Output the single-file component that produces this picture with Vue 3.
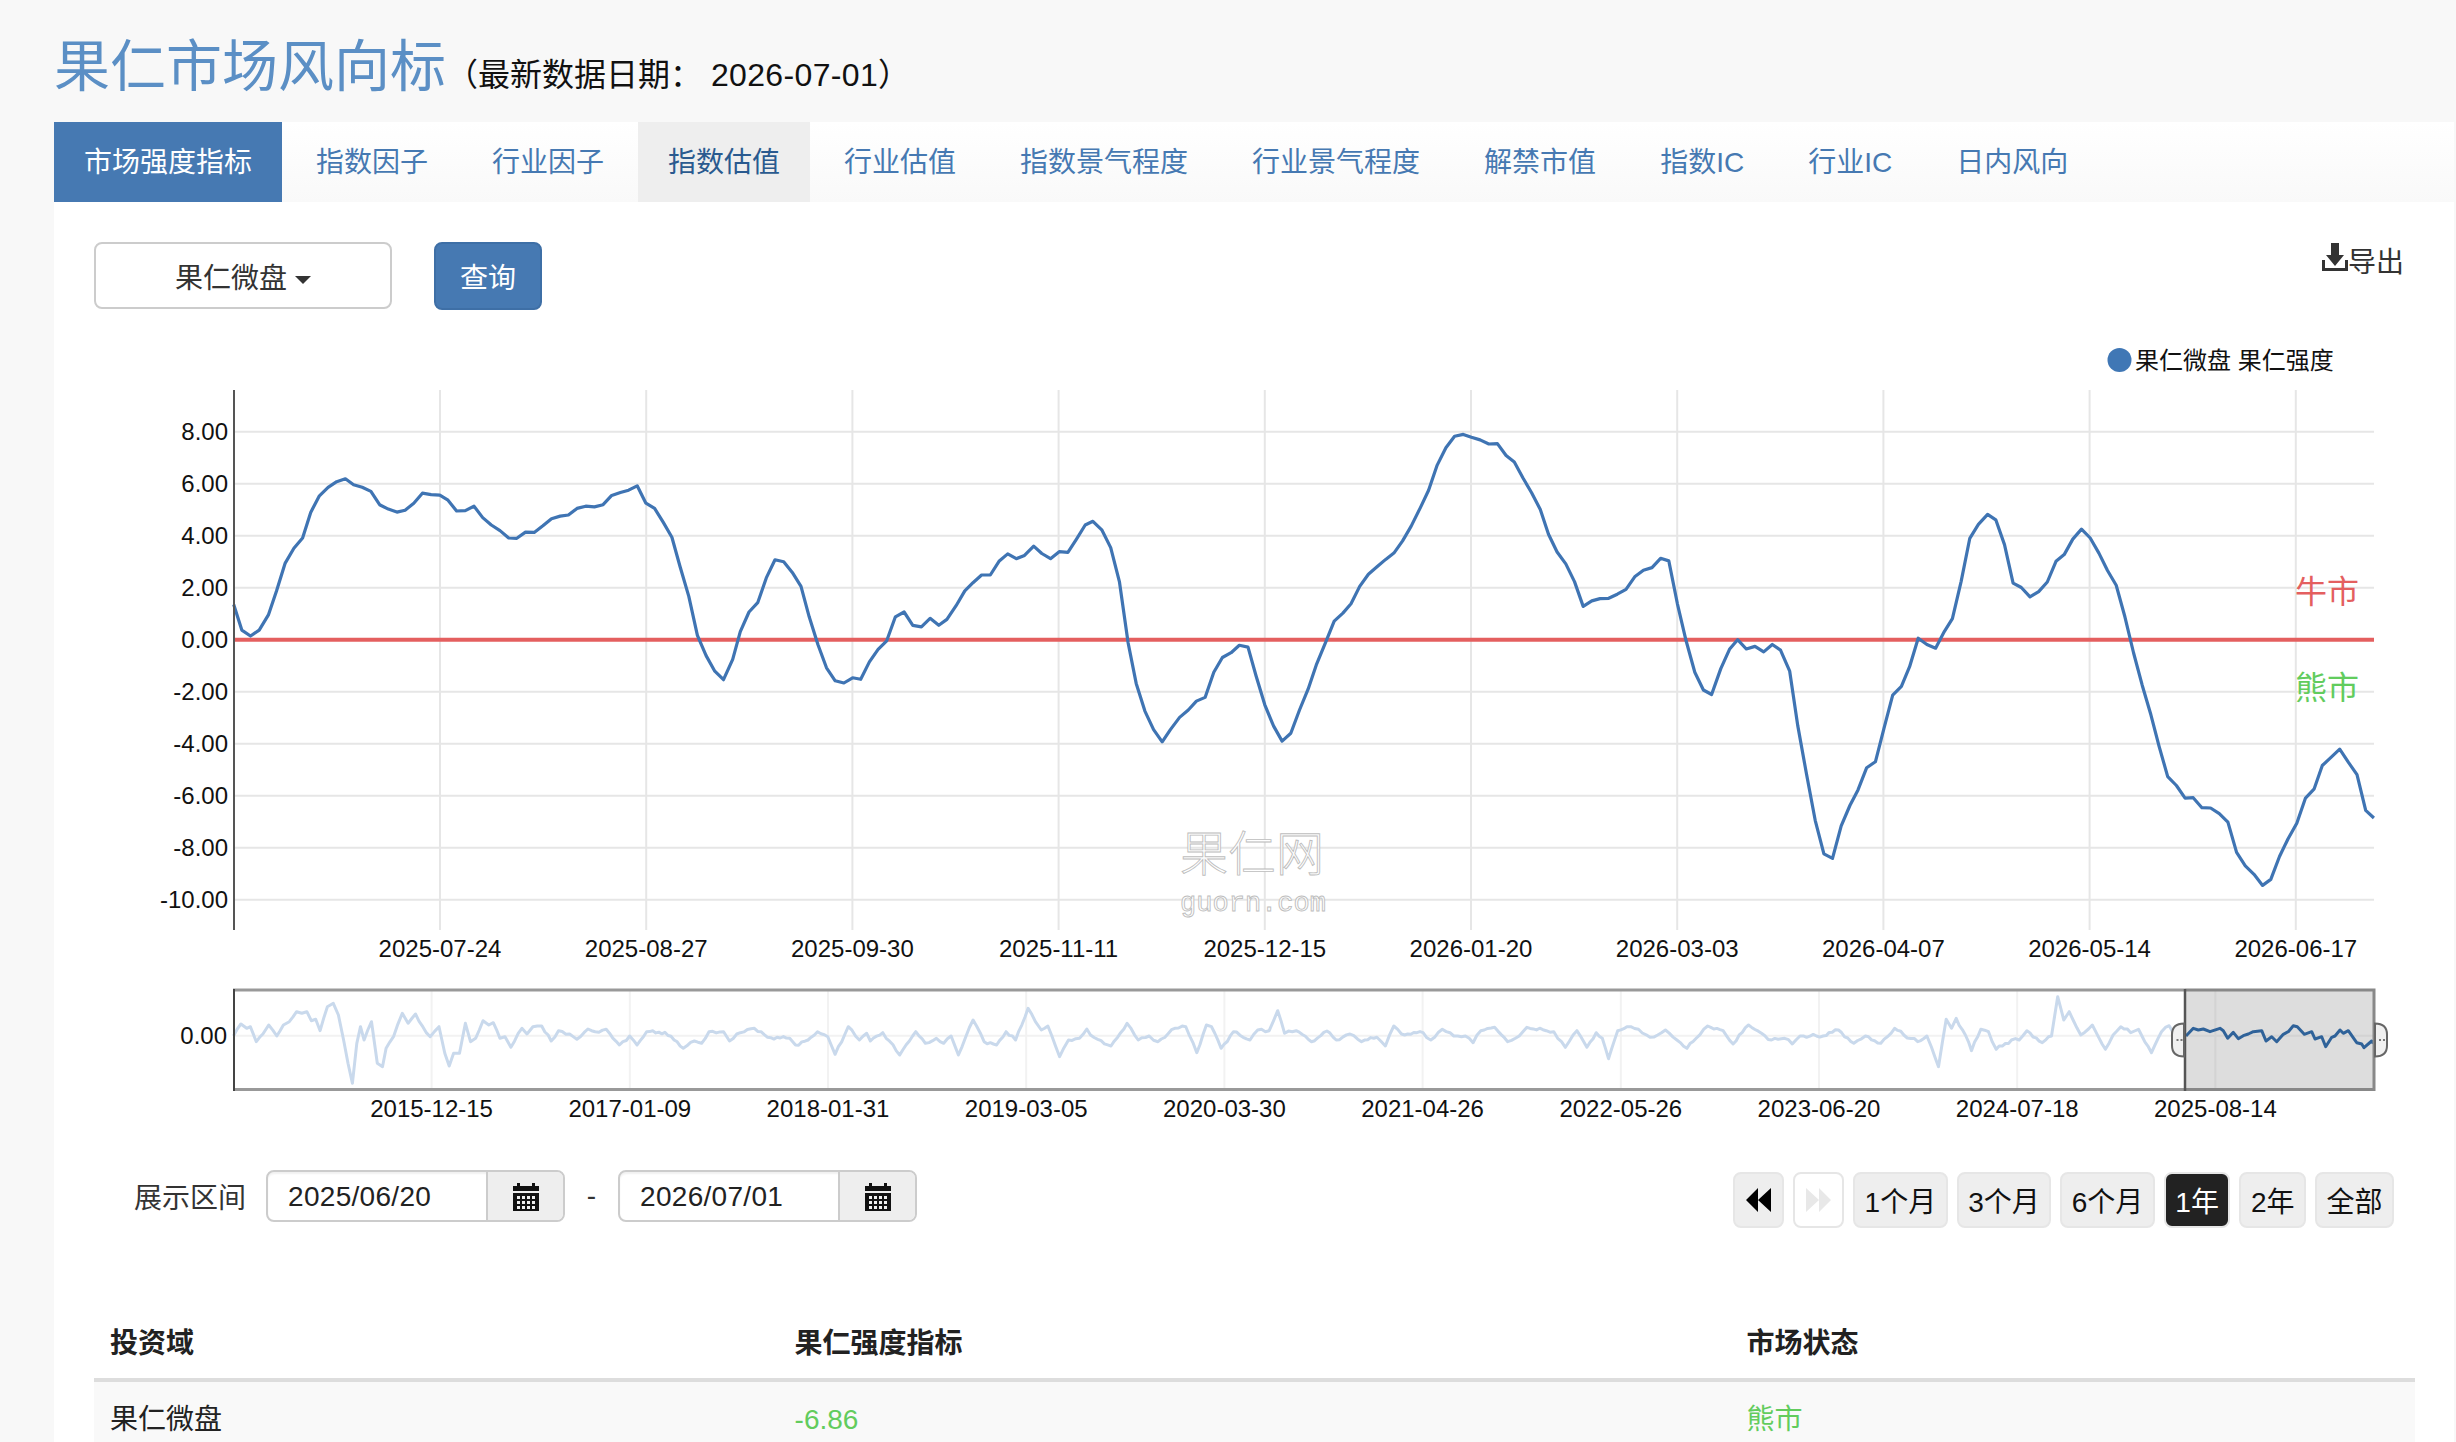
<script setup>
const tabs = [
  "市场强度指标", "指数因子", "行业因子", "指数估值", "行业估值", "指数景气程度",
  "行业景气程度", "解禁市值", "指数IC", "行业IC", "日内风向",
];

// series traced off the chart, as [x, y] pairs in crop coordinates
const crop = (flat, x0, y0, sx, sy) => {
  const out = [];
  for (let i = 0; i < flat.length; i += 2) {
    out.push([x0 + flat[i] / sx, y0 + flat[i + 1] / sy]);
  }
  return out;
};

const toPoints = (pts) => pts.map(([x, y]) => `${x.toFixed(1)},${y.toFixed(1)}`).join(" ");

// the navigator has daily data, so fill the traced points in with a small wiggle
const wiggle = (pts) => {
  const out = [];
  pts.forEach((p, i) => {
    const next = pts[i + 1];
    out.push(p);
    if (!next) return;
    const steps = Math.floor((next[0] - p[0]) / 3);
    for (let s = 1; s < steps; s++) {
      const t = s / steps;
      const x = p[0] + (next[0] - p[0]) * t;
      const noise = Math.sin(x * 2.3) * 0.9 + Math.sin(x * 5.1) * 0.7;
      out.push([x, p[1] + (next[1] - p[1]) * t + noise]);
    }
  });
  return out;
};

const mainA = [262,607,278,676,295,692,312,676,330,635,346,570,363,495,380,455,397,427,413,358,430,313,447,290,464,275,481,267,497,283,514,290,531,301,548,337,565,349,582,357,598,352,615,333,632,306,649,310,666,311,682,325,699,354,716,353,733,341,750,372,767,392,784,407,801,427,817,428,834,411,851,412,868,394,885,375,902,368,918,365,935,347,952,341,969,343,986,337,1003,312,1020,304,1036,298,1053,286,1070,333,1087,347,1104,385,1121,425,1137,505,1154,585,1171,690,1188,745,1205,787,1222,810,1240,755,1255,680,1272,627,1289,602,1306,535,1323,486,1340,491,1357,520,1374,558,1390,640,1407,715,1424,778,1441,813,1458,819,1475,805,1491,809,1508,762,1525,728,1542,705,1559,640];
const mainB = [8,627,25,663,42,667,59,644,76,663,92,647,110,610,127,570,143,548,160,527,177,527,194,490,211,470,228,483,244,474,262,449,278,469,295,483,312,464,329,466,346,430,363,392,378,382,396,406,413,453,430,545,447,710,463,820,480,895,497,945,514,978,530,945,548,912,565,892,581,868,598,858,615,790,632,750,649,737,665,717,682,722,698,800,715,878,732,935,749,976,766,955,783,892,800,835,816,770,834,710,851,652,868,630,884,605,901,558,918,525,935,505,952,485,968,468,985,435,1002,395,1020,345,1036,298,1053,230,1070,183,1087,152,1104,147,1120,155,1137,162,1154,173,1171,172,1188,204,1204,222,1221,265,1238,305,1255,350,1271,417,1288,465,1305,497,1322,545,1339,612,1356,597,1372,591,1389,590,1406,579,1423,566,1440,532,1457,514,1474,507];
const mainC = [9,482,25,489,42,605,59,705,76,790,93,838,109,850,127,780,144,728,160,702,177,727,194,720,211,735,228,715,244,730,262,787,278,935,295,1065,312,1190,329,1281,346,1293,363,1205,380,1150,396,1108,413,1048,430,1032,447,940,464,852,481,828,497,775,514,698,531,715,548,725,565,680,581,645,598,545,615,428,632,390,650,363,666,378,683,445,700,549,716,561,733,586,750,572,767,546,784,490,800,472,817,430,834,403,851,427,868,468,885,515,902,555,919,640,936,738,953,825,970,905,986,990,1003,1072,1020,1096,1037,1130,1053,1129,1070,1156,1087,1157,1104,1172,1121,1195,1138,1277,1155,1313,1172,1336,1189,1366,1205,1350,1222,1288,1239,1240,1256,1198,1273,1130,1290,1105,1306,1042,1323,1020,1340,998,1357,1033,1374,1067,1391,1163,1407,1184];
const mainLine = toPoints([
  ...crop(mainA, 100, 380, 1.96, 2.703),
  ...crop(mainB, 900, 380, 1.96, 2.703),
  ...crop(mainC, 1656, 380, 1.96, 2.703),
]);

const navA = [182,228,192,192,200,205,205,200,213,245,222,222,230,195,241,228,250,195,258,185,268,155,275,160,282,155,288,182,294,178,300,212,310,140,318,130,325,165,332,240,338,310,344,370,350,250,355,200,360,240,370,185,378,310,385,320,390,265,400,230,412,160,420,190,430,162,440,200,450,230,462,200,470,280,476,318,482,280,490,280,498,190,505,245,512,235,522,182,530,195,536,188,545,235,552,230,560,262,575,205,582,222,590,200,602,198,615,243,625,212,640,222,650,238,665,207,675,215,690,208,708,255,722,228,732,255,745,215,770,217,795,265,810,243,820,250,830,215,850,215,858,243,868,222,892,205,910,232,940,235,948,255,965,240,978,215,992,230,1002,283,1020,200,1035,240,1045,220,1050,243,1067,218,1090,285,1112,215,1125,250,1140,235,1150,250,1160,228,1170,285,1190,180,1205,245,1222,255,1235,215,1248,240,1265,145,1275,185,1283,210,1292,198,1308,290,1320,240,1335,235,1345,207,1350,225,1360,238,1378,258,1400,190,1415,240,1430,228,1442,245,1465,205,1480,200,1495,278,1508,195,1515,200,1528,265,1545,215,1558,232];
const navB = [0,240,10,210,25,212,36,152,45,220,60,212,80,245,100,213,112,240,130,222,145,245,165,232,176,258,187,198,197,222,225,218,235,240,250,208,265,228,280,228,290,248,300,212,318,202,335,245,345,235,360,202,385,212,395,215,410,262,425,212,438,262,450,218,458,235,466,296,478,212,490,200,505,208,520,232,530,225,540,210,555,240,568,265,580,235,595,198,615,212,628,252,648,195,665,220,678,240,695,235,705,252,715,228,745,228,765,210,785,250,800,228,820,250,838,205,850,225,868,245,880,228,886,262,895,320,905,178,912,205,918,175,930,225,938,272,950,208,960,215,970,268,990,240,1000,240,1010,212,1030,248,1042,228,1050,110,1058,180,1065,155,1070,180,1080,225,1095,195,1112,268,1122,225,1132,200,1145,218,1155,208,1172,278,1185,215,1195,197,1205,240];
const navLine = toPoints(wiggle([...crop(navA, 100, 960, 1.363, 3), ...crop(navB, 1250, 960, 1.3, 3)]));
const navSel = [78,168,100,145,115,150,130,147,150,155,180,145,190,152,203,175,220,157,235,176,250,167,265,162,280,155,305,152,318,183,335,170,350,185,370,163,385,155,400,137,412,140,433,163,455,155,465,177,485,170,497,200,515,172,525,168,540,150,550,160,565,152,590,188,605,192,612,203,635,183,640,190];
const navSelLine = toPoints(crop(navSel, 2160, 980, 3, 3));

const yTicks = [8, 6, 4, 2, 0, -2, -4, -6, -8, -10].map((v) => ({
  label: v.toFixed(2),
  y: 639.7 - v * 26,
}));

const xDates = ["2025-07-24", "2025-08-27", "2025-09-30", "2025-11-11", "2025-12-15", "2026-01-20", "2026-03-03", "2026-04-07", "2026-05-14", "2026-06-17"];
const xTicks = xDates.map((label, i) => ({ label, x: 440 + i * 206.2 }));

const navDates = ["2015-12-15", "2017-01-09", "2018-01-31", "2019-03-05", "2020-03-30", "2021-04-26", "2022-05-26", "2023-06-20", "2024-07-18", "2025-08-14"];
const navTicks = navDates.map((label, i) => ({ label, x: 431.6 + i * 198.2 }));

const ranges = ["1个月", "3个月", "6个月", "1年", "2年", "全部"];
const dates = ["2025/06/20", "2026/07/01"];
</script>

<template>
  <div class="page">
    <h1 class="title">果仁市场风向标<small>（最新数据日期： <span class="stamp">2026-07-01</span>）</small></h1>

    <div class="card">
      <ul class="tabs">
        <li
          v-for="(tab, i) in tabs"
          :key="tab"
          :class="{ active: i === 0, hover: i === 3 }"
        >{{ tab }}</li>
      </ul>

      <div class="panel">
        <div class="controls">
          <button class="picker">果仁微盘<span class="caret"></span></button>
          <button class="query">查询</button>
          <a class="export">
            <svg width="26" height="28" viewBox="0 0 26 28">
              <path d="M9 0h8v12h5l-9 11-9-11h5z" fill="#333" />
              <path d="M0 17h3v8h20v-8h3v11H0z" fill="#333" />
            </svg>
            <span>导出</span>
          </a>
        </div>

        <svg class="chart" width="2321" height="810" viewBox="94 330 2321 810">
          <!-- legend -->
          <circle cx="2119.5" cy="360" r="12" fill="#4077b5" />
          <text class="lbl" x="2135" y="368.5">果仁微盘 果仁强度</text>

          <!-- grid -->
          <line v-for="t in xTicks" :key="t.label" :x1="t.x" :x2="t.x" y1="390" y2="930" class="grid" />
          <line v-for="t in yTicks" :key="t.label" x1="234" x2="2374" :y1="t.y" :y2="t.y" class="grid" />

          <!-- watermark -->
          <text class="wm wm-cn" x="1252" y="871" text-anchor="middle">果仁网</text>
          <text class="wm wm-en" x="1253" y="911" text-anchor="middle">guorn.com</text>

          <line x1="234" x2="2374" y1="639.7" y2="639.7" stroke="#e45f5f" stroke-width="4" />
          <polyline :points="mainLine" fill="none" stroke="#3f74b3" stroke-width="3.2" stroke-linejoin="round" />
          <line x1="234" x2="234" y1="390" y2="930" stroke="#555" stroke-width="2" />

          <text v-for="t in yTicks" :key="t.label" class="lbl" x="228" :y="t.y + 8.5" text-anchor="end">{{ t.label }}</text>
          <text v-for="t in xTicks" :key="t.label" class="lbl" :x="t.x" y="957" text-anchor="middle">{{ t.label }}</text>

          <text class="market bull" x="2295" y="603">牛市</text>
          <text class="market bear" x="2295" y="699">熊市</text>

          <!-- navigator -->
          <line v-for="t in navTicks" :key="t.label" :x1="t.x" :x2="t.x" y1="990" y2="1090" class="nav-grid" />
          <line x1="234" x2="2374" y1="1035.7" y2="1035.7" class="nav-grid" />
          <polyline :points="navLine" fill="none" stroke="#c9d9ec" stroke-width="3" stroke-linejoin="round" />
          <rect x="2185" y="990" width="189" height="100" fill="#666" fill-opacity="0.22" />
          <polyline :points="navSelLine" fill="none" stroke="#2f6299" stroke-width="3" stroke-linejoin="round" />
          <line x1="233" x2="2185" y1="990" y2="990" stroke="#999" stroke-width="3" />
          <line x1="233" x2="2185" y1="1089.5" y2="1089.5" stroke="#999" stroke-width="3" />
          <line x1="234" x2="234" y1="989" y2="1091" stroke="#444" stroke-width="2" />
          <path d="M2185 990H2374V1089.5H2185" fill="none" stroke="#888" stroke-width="3" />
          <line x1="2185" x2="2185" y1="989" y2="1091" stroke="#555" stroke-width="2.5" />
          <path d="M2184 1023.5c-8 0-12 4-12 11v11c0 7 4 11 12 11z" fill="#f0f0f0" stroke="#666" stroke-width="2" />
          <path d="M2375 1023.5c8 0 12 4 12 11v11c0 7-4 11-12 11z" fill="#f0f0f0" stroke="#666" stroke-width="2" />
          <path d="M2176.5 1040h2M2180.5 1040h2M2379 1040h2M2383 1040h2" stroke="#777" stroke-width="2" />
          <text class="lbl" x="227" y="1044" text-anchor="end">0.00</text>
          <text v-for="t in navTicks" :key="t.label" class="lbl" :x="t.x" y="1116.5" text-anchor="middle">{{ t.label }}</text>
        </svg>

        <div class="range-row">
          <div class="range-left">
            <span class="range-label">展示区间</span>
            <template v-for="(d, i) in dates" :key="d">
              <span v-if="i" class="dash">-</span>
              <div class="date-group">
                <span class="date-text">{{ d }}</span>
                <span class="addon">
                  <svg width="26" height="29" viewBox="0 0 26 29">
                    <path d="M0 4h4V1h3v3h12V1h3v3h4v5H0z" fill="#111" />
                    <path fill-rule="evenodd" fill="#111" d="M0 11h26v18H0zM4 14v3h3v-3zM9 14v3h3v-3zM14 14v3h3v-3zM19 14v3h3v-3zM4 19v3h3v-3zM9 19v3h3v-3zM14 19v3h3v-3zM19 19v3h3v-3zM4 24v3h3v-3zM9 24v3h3v-3zM14 24v3h3v-3zM19 24v3h3v-3z" />
                  </svg>
                </span>
              </div>
            </template>
          </div>
          <div class="range-btns">
            <button class="btn icon-btn">
              <svg width="25" height="24" viewBox="0 0 25 24"><path d="M0 12 12 0v24zM12 12 25 0v24z" fill="#000" /></svg>
            </button>
            <button class="btn icon-btn off">
              <svg width="25" height="24" viewBox="0 0 25 24"><path d="M25 12 13 0v24zM13 12 0 0v24z" fill="#e8e8e8" /></svg>
            </button>
            <button v-for="r in ranges" :key="r" class="btn" :class="{ on: r === '1年' }">{{ r }}</button>
          </div>
        </div>

        <table class="summary">
          <colgroup>
            <col class="c1" />
            <col class="c2" />
            <col class="c3" />
          </colgroup>
          <thead>
            <tr><th>投资域</th><th>果仁强度指标</th><th>市场状态</th></tr>
          </thead>
          <tbody>
            <tr><td>果仁微盘</td><td class="bear-text">-6.86</td><td class="bear-text">熊市</td></tr>
          </tbody>
        </table>
      </div>
    </div>
  </div>
</template>

<style>
html,
body {
  margin: 0;
  background: #f8f8f8;
}
</style>

<style scoped>
.page {
  height: 1442px;
  overflow: hidden;
  background: #f8f8f8;
  font-family: "Liberation Sans", "Noto Sans CJK SC", sans-serif;
  color: #333;
}

.title {
  height: 122px;
  box-sizing: border-box;
  margin: 0;
  padding: 27px 0 0 54px;
  font-size: 56px;
  font-weight: 400;
  line-height: 80px;
  color: #5b8fc5;
}

.title small {
  font-size: 32px;
  color: #111;
}

.stamp {
  letter-spacing: 0.35px;
}

.card {
  margin: 0 2px 0 54px;
  background: #fff;
}

.tabs {
  display: flex;
  gap: 4px;
  height: 80px;
  margin: 0;
  padding: 0;
  list-style: none;
  background: linear-gradient(#fff, #f9f9f9);
}

.tabs li {
  padding: 2px 30px 0;
  height: 78px;
  font-size: 28px;
  line-height: 78px;
  color: #4679b2;
}

.tabs li.active {
  background: #4679b2;
  color: #fff;
}

.tabs li.hover {
  background: #eee;
  color: #2a5a8f;
}

.panel {
  padding: 40px 39px 0 40px;
}

.controls {
  display: flex;
  align-items: flex-start;
  height: 68px;
}

.picker,
.query,
.btn {
  font-family: inherit;
}

.picker {
  width: 298px;
  height: 67px;
  box-sizing: border-box;
  border: 2px solid #ccc;
  border-radius: 8px;
  background: #fff;
  font-size: 28px;
  color: #333;
}

.caret {
  display: inline-block;
  margin-left: 8px;
  vertical-align: middle;
  border-top: 8px solid #333;
  border-left: 8px solid transparent;
  border-right: 8px solid transparent;
}

.query {
  width: 108px;
  height: 68px;
  margin-left: 42px;
  border: 2px solid #3e6fa6;
  border-radius: 8px;
  background: #4679b2;
  font-size: 28px;
  color: #fff;
}

.export {
  display: flex;
  align-items: flex-start;
  margin-left: auto;
  margin-right: 11px;
  margin-top: 1px;
  font-size: 28px;
  line-height: 32px;
  color: #333;
}

.export span {
  padding-top: 4px;
}

.chart {
  display: block;
  margin-top: 20px;
}

.lbl {
  font-size: 24px;
  fill: #111;
}

.grid {
  stroke: #e6e6e6;
  stroke-width: 2;
}

.nav-grid {
  stroke: #f2f2f2;
  stroke-width: 2;
}

.wm {
  fill: #fff;
  stroke: #bdbdbd;
  stroke-width: 0.9;
}

.wm-cn {
  font-size: 48px;
  font-family: "Noto Sans CJK SC", sans-serif;
  font-weight: 300;
}

.wm-en {
  font-size: 27px;
  font-family: "Liberation Mono", monospace;
}

.market {
  font-size: 32px;
}

.bull {
  fill: #e45f5f;
}

.bear {
  fill: #62cc5d;
}

.range-row {
  display: flex;
  justify-content: space-between;
  align-items: flex-start;
  height: 58px;
  margin-top: 30px;
  padding: 0 21px 0 40px;
}

.range-left {
  display: flex;
  align-items: center;
}

.range-label {
  margin-right: 20px;
  font-size: 28px;
}

.dash {
  width: 53px;
  text-align: center;
  font-size: 28px;
}

.date-group {
  display: flex;
  width: 299px;
  height: 52px;
  box-sizing: border-box;
  border: 2px solid #ccc;
  border-radius: 8px;
  box-shadow: inset 0 2px 2px rgba(0, 0, 0, 0.06);
  overflow: hidden;
}

.date-text {
  width: 218px;
  padding: 1px 0 0 20px;
  box-sizing: border-box;
  font-size: 28px;
  letter-spacing: 0.3px;
  line-height: 48px;
  color: #222;
}

.addon {
  display: flex;
  flex: 1;
  align-items: center;
  justify-content: center;
  border-left: 2px solid #ccc;
  background: #eee;
}

.range-btns {
  display: flex;
  gap: 9px;
  margin-top: 2px;
}

.btn {
  height: 56px;
  box-sizing: border-box;
  padding: 0 9.5px;
  border: 2px solid #e6e6e6;
  border-radius: 8px;
  background: #eee;
  font-size: 28px;
  color: #111;
}

.icon-btn {
  display: flex;
  align-items: center;
  justify-content: center;
  width: 51px;
  padding: 0;
}

.icon-btn.off {
  background: #fff;
}

.btn.on {
  background: #222;
  color: #fff;
}

.summary {
  width: 2321px;
  margin-top: 78px;
  border-collapse: collapse;
  table-layout: fixed;
  font-size: 28px;
}

.c1 {
  width: 684.6px;
}

.c2 {
  width: 952px;
}

.summary th,
.summary td {
  padding: 18px 16px 14px;
  line-height: 40px;
  text-align: left;
}

.summary th {
  border-bottom: 4px solid #ddd;
  font-weight: 700;
  color: #222;
}

.summary td {
  background: #f9f9f9;
  color: #222;
}

.summary td.bear-text {
  color: #62cc5d;
}
</style>
